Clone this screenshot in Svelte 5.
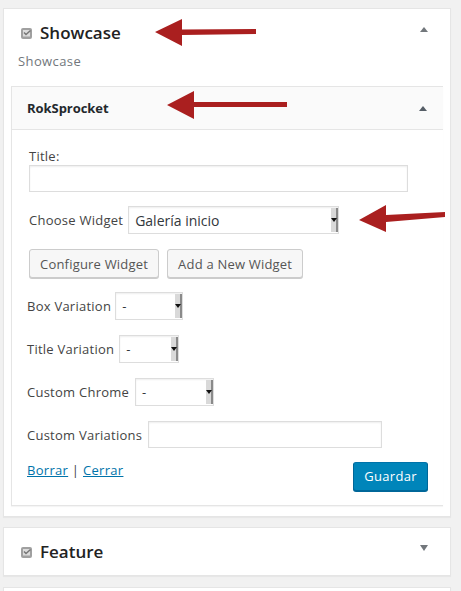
<script>
  const variations = [
    { label: 'Box Variation', width: 68, gap: 4 },
    { label: 'Title Variation', width: 60, gap: 5 },
    { label: 'Custom Chrome', width: 79, gap: 6 }
  ];
</script>

<div class="page">
  <section class="panel showcase">
    <header class="panel-head">
      <span class="check">
        <svg width="11" height="11" viewBox="0 0 11 11"><rect width="11" height="11" rx="2" fill="#a0a0a0" /><path d="M2 2h7v6.500h-7z" fill="#dcdcdc" /><path d="M3 4.500l2 2L9.500 2.500" fill="none" stroke="#777" stroke-width="1.500" /></svg>
      </span>
      <h2>Showcase</h2>
      <span class="tri up"></span>
    </header>
    <p class="sub">Showcase</p>

    <div class="inner">
      <div class="inner-head">
        <h3>RokSprocket</h3>
        <span class="tri up dark"></span>
      </div>
      <div class="form">
        <label class="title-label" for="title">Title:</label>
        <input id="title" class="text wide" type="text" />

        <div class="row choose">
          <span class="lbl">Choose Widget</span>
          <div class="select big">
            <span class="val">Galería inicio</span>
            <span class="strip"><i></i></span>
          </div>
        </div>

        <div class="buttons">
          <button type="button" class="btn">Configure Widget</button>
          <button type="button" class="btn">Add a New Widget</button>
        </div>

        {#each variations as v}
          <div class="row variation">
            <span class="lbl" style="margin-right: {v.gap}px">{v.label}</span>
            <div class="select" style="width: {v.width}px">
              <span class="val">-</span>
              <span class="strip"><i></i></span>
            </div>
          </div>
        {/each}

        <div class="row custom">
          <span class="lbl">Custom Variations</span>
          <input class="text cv" type="text" />
        </div>

        <div class="actions">
          <div class="links"><a href="#borrar">Borrar</a> | <a href="#cerrar">Cerrar</a></div>
          <button type="button" class="save">Guardar</button>
        </div>
      </div>
    </div>
  </section>

  <section class="panel feature">
    <header class="panel-head">
      <span class="check">
        <svg width="11" height="11" viewBox="0 0 11 11"><rect width="11" height="11" rx="2" fill="#a0a0a0" /><path d="M2 2h7v6.500h-7z" fill="#dcdcdc" /><path d="M3 4.500l2 2L9.500 2.500" fill="none" stroke="#777" stroke-width="1.500" /></svg>
      </span>
      <h2>Feature</h2>
      <span class="tri down"></span>
    </header>
  </section>

  <section class="panel last"></section>

  <!-- red annotation arrows sit over the screenshot -->
  <svg class="arrows" width="461" height="591" viewBox="0 0 461 591">
    <g fill="#aa1f1f">
      <path d="M155 32L182 19V29.500L256 29V34L182 35V46Z" />
      <path d="M167 105L194 91V102L287 102V107L194 107V119Z" />
      <path d="M359 220L386 205V215L445 212V217L386 222V232Z" />
    </g>
  </svg>
</div>

<style>
  :global(body) {
    margin: 0;
    background: #f1f1f1;
  }
  .page {
    position: relative;
    width: 461px;
    height: 591px;
    overflow: hidden;
    padding-top: 8px;
    box-sizing: border-box;
    font-family: "Open Sans", sans-serif;
    font-size: 13px;
    letter-spacing: 0.25px;
    color: #444;
  }
  .panel {
    width: 448px;
    margin-left: 3px;
    box-sizing: border-box;
    background: #fff;
    border: 1px solid #e5e5e5;
    box-shadow: 0 1px 1px rgba(0, 0, 0, 0.04);
  }
  .showcase {
    height: 509px;
  }
  .feature {
    height: 49px;
    margin-top: 10px;
  }
  .last {
    height: 40px;
    margin-top: 11px;
  }
  .panel-head {
    display: flex;
    align-items: center;
    height: 47px;
    padding: 0 22px 0 17px;
  }
  .check {
    display: flex;
    margin-right: 8px;
    margin-top: 1px;
  }
  h2 {
    margin: 0;
    flex: 1;
    font-size: 17px;
    font-weight: 600;
    letter-spacing: 0;
    color: #222;
  }
  .sub {
    margin: -2px 0 0 14px;
    height: 32px;
    font-size: 13px;
    line-height: 14px;
    letter-spacing: 0.4px;
    color: #72777c;
  }
  .tri {
    width: 0;
    height: 0;
    border-left: 4px solid transparent;
    border-right: 4px solid transparent;
    margin-top: -6px;
  }
  .up {
    border-bottom: 5px solid #72777c;
  }
  .up.dark {
    border-left-width: 4.5px;
    border-right-width: 4.5px;
    border-bottom-color: #555d66;
    margin-top: 0;
  }
  .down {
    border-top: 6px solid #72777c;
    margin-top: -8px;
  }
  .inner {
    margin: 0 7px;
    height: 420px;
    box-sizing: border-box;
    border: 1px solid #e5e5e5;
    border-right: 0;
    box-shadow: 0 1px 1px rgba(0, 0, 0, 0.04);
  }
  .inner-head {
    display: flex;
    align-items: center;
    height: 43px;
    padding: 0 16px 0 15px;
    box-sizing: border-box;
    background: #fafafa;
    border-bottom: 1px solid #e5e5e5;
  }
  h3 {
    margin: 0;
    flex: 1;
    font-size: 13px;
    font-weight: 700;
    letter-spacing: -0.05px;
    color: #23282d;
  }
  .form {
    padding: 18px 15px 0;
    box-sizing: border-box;
  }
  .title-label {
    display: block;
    margin-left: 2px;
    height: 17px;
    line-height: 17px;
  }
  .text {
    display: block;
    box-sizing: border-box;
    height: 27px;
    margin: 0;
    padding: 0;
    background: #fff;
    border: 1px solid #ddd;
    box-shadow: inset 0 1px 2px rgba(0, 0, 0, 0.07);
    outline: none;
  }
  .wide {
    width: 379px;
    margin-left: 2px;
  }
  .cv {
    width: 234px;
  }
  .row {
    display: flex;
    align-items: center;
  }
  .lbl {
    white-space: nowrap;
    margin-right: 5px;
  }
  .custom .lbl {
    margin-right: 6px;
  }
  .choose {
    margin: 14px 0 0 2px;
  }
  .select {
    position: relative;
    box-sizing: border-box;
    display: flex;
    align-items: center;
    height: 28px;
    background: #fff;
    border: 1px solid #ddd;
    box-shadow: inset 0 1px 2px rgba(0, 0, 0, 0.07);
  }
  .big {
    width: 211px;
  }
  .val {
    padding-left: 6px;
    color: #32373c;
  }
  .big .val {
    font-size: 14px;
    letter-spacing: 0;
  }
  .strip {
    position: absolute;
    right: 0;
    top: 1px;
    bottom: 1px;
    width: 7px;
    background: #d9d9d9;
    border-right: 2px solid #8a8a8a;
    box-sizing: border-box;
  }
  .strip i {
    position: absolute;
    left: 0;
    top: 10px;
    width: 0;
    height: 0;
    border-left: 3px solid transparent;
    border-right: 3px solid transparent;
    border-top: 4px solid #111;
  }
  .buttons {
    display: flex;
    gap: 8px;
    margin: 15px 0 14px 2px;
  }
  .btn {
    box-sizing: border-box;
    height: 29px;
    padding: 0 10px;
    font: inherit;
    letter-spacing: 0.2px;
    color: #555;
    background: #f7f7f7;
    border: 1px solid #ccc;
    border-radius: 3px;
    box-shadow: 0 1px 0 #ccc;
  }
  .variation {
    margin-bottom: 15px;
  }
  .actions {
    display: flex;
    justify-content: space-between;
    margin: 14px 0 0 0;
  }
  .links {
    line-height: 14px;
    padding-top: 1px;
    letter-spacing: 0.3px;
  }
  a {
    color: #0073aa;
  }
  .save {
    box-sizing: border-box;
    height: 29px;
    width: 75px;
    padding: 0 0 1px;
    font: inherit;
    letter-spacing: 0.3px;
    color: #fff;
    background: #0085ba;
    border: 1px solid #006799;
    border-color: #0073aa #006799 #006799;
    border-radius: 3px;
    box-shadow: 0 1px 0 #006799;
  }
  .arrows {
    position: absolute;
    left: 0;
    top: 0;
    pointer-events: none;
  }
</style>
